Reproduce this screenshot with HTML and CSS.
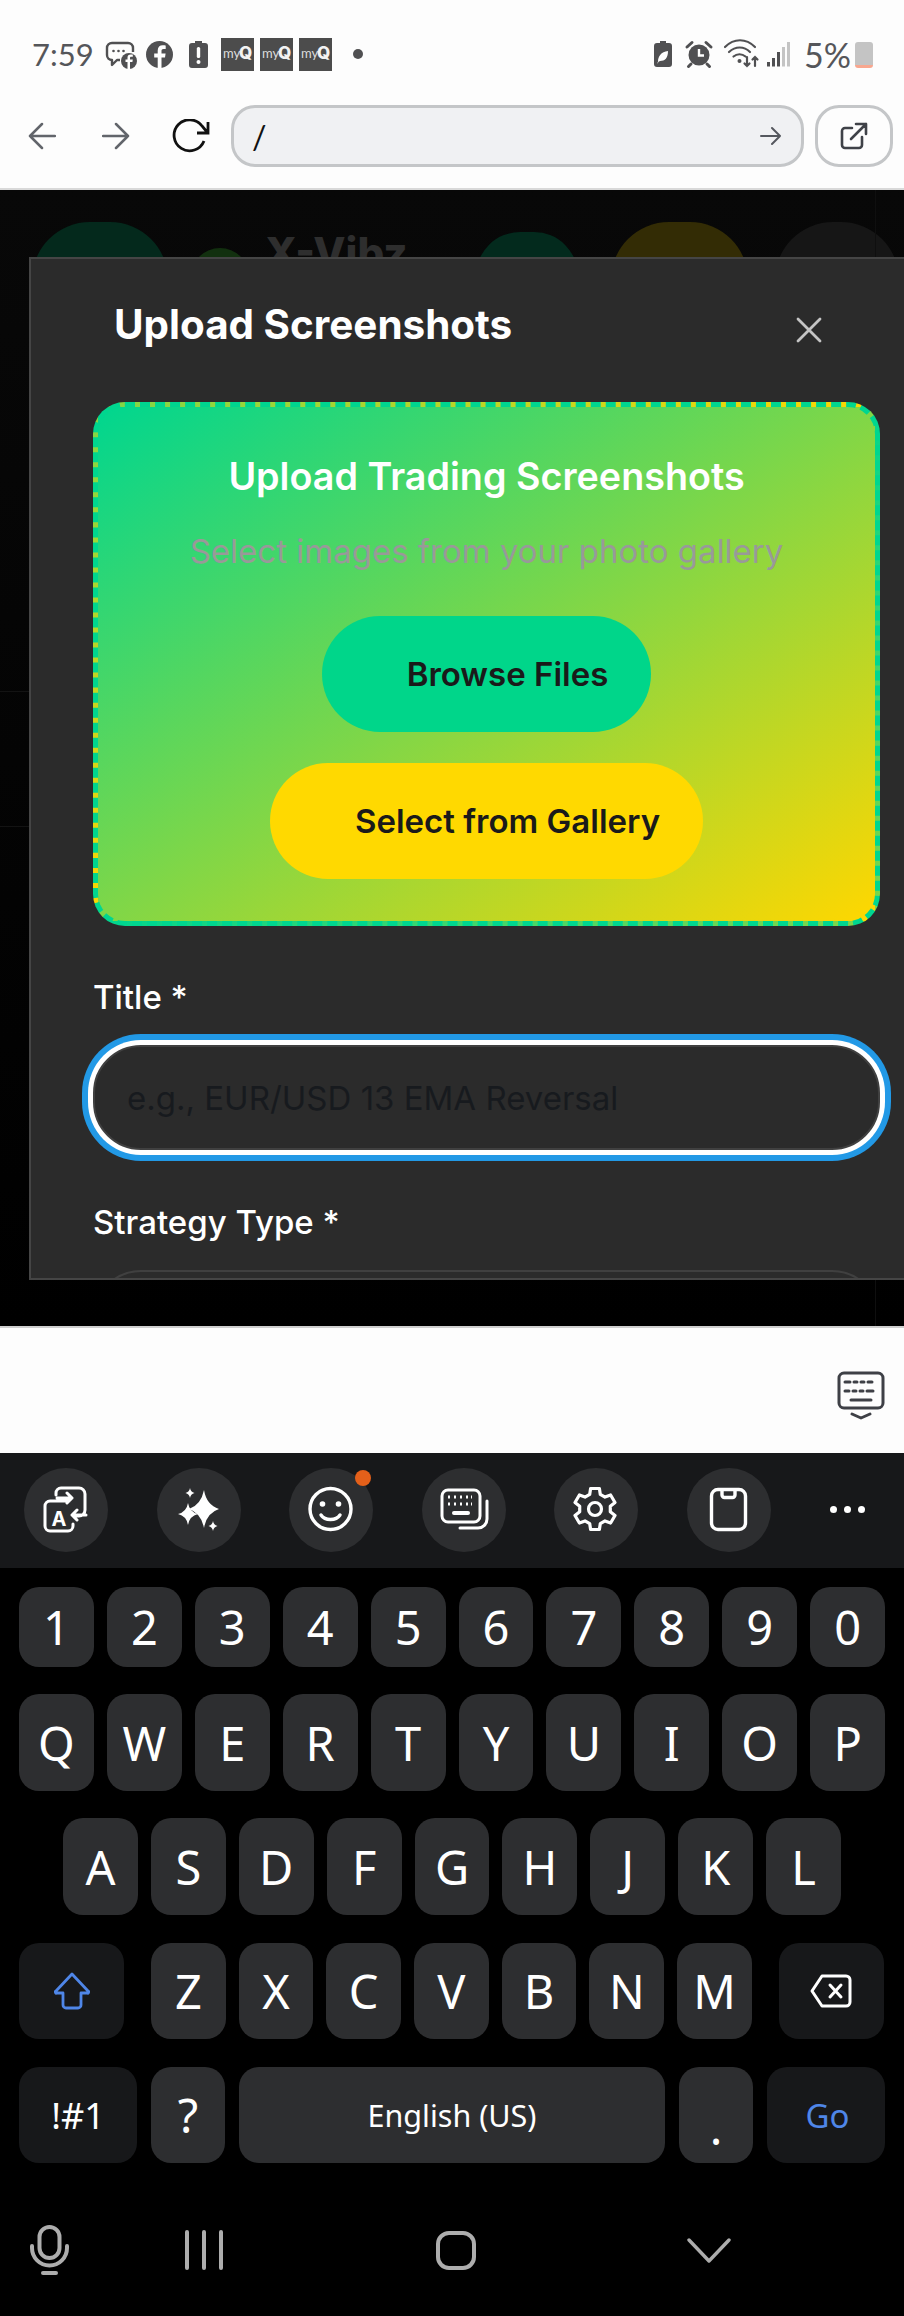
FILE: index.html
```html
<!DOCTYPE html>
<html lang="en">
<head>
  <meta charset="UTF-8">
  <meta name="viewport" content="width=device-width, initial-scale=1.0">
  <title>Upload Screenshots</title>
  <link rel="stylesheet" href="styles.css">
</head>
<body>
  <div class="phone">
    <!-- status bar + browser bar -->
    <header class="chrome">
      <div class="status">
        <span class="clock">7:59</span>
        <svg class="notif-icons" viewBox="105 38 258 33" width="258" height="33">
          <path d="M112 43h16a5 5 0 0 1 5 5v4M120 60h-3l-5 5v-5a5 5 0 0 1-5-5v-7a5 5 0 0 1 5-5" fill="none" stroke="#505052" stroke-width="2.4" stroke-linejoin="round"/>
          <circle cx="113.5" cy="51" r="1.3" fill="#505052"/><circle cx="118.5" cy="51" r="1.3" fill="#505052"/><circle cx="123.5" cy="51" r="1.3" fill="#505052"/>
          <circle cx="129" cy="61" r="8" fill="#505052"/>
          <path d="M130 69v-7h2.4l.4-2.4H130V58c0-.8.4-1.2 1.2-1.2h1.6v-2.2h-2c-2.2 0-3.3 1.2-3.3 3.2v1.8h-2V62h2v7z" fill="#fff"/>
          <circle cx="159.5" cy="54.5" r="13.5" fill="#505052"/>
          <path d="M161.500 68v-10.500h3.500l.6-4h-4.100V51c0-1.200.5-2 2.100-2h2.100v-3.500c-.5-.1-1.700-.2-3-.2-3 0-5 1.800-5 5.100v3.100h-3.500v4h3.500V68z" fill="#fff"/>
          <path d="M195 43v-2h7v2h3a3 3 0 0 1 3 3v19a3 3 0 0 1-3 3h-13a3 3 0 0 1-3-3V46a3 3 0 0 1 3-3z" fill="#505052"/>
          <rect x="196.800" y="47" width="3.400" height="11" rx="1.500" fill="#fff"/><circle cx="198.500" cy="62" r="2" fill="#fff"/>
          <g class="myq">
            <rect x="221" y="38" width="33" height="33"/><text x="223" y="58" class="myq-my">my</text><text x="239" y="59" class="myq-q">Q</text>
            <rect x="260" y="38" width="33" height="33"/><text x="262" y="58" class="myq-my">my</text><text x="278" y="59" class="myq-q">Q</text>
            <rect x="299" y="38" width="33" height="33"/><text x="301" y="58" class="myq-my">my</text><text x="317" y="59" class="myq-q">Q</text>
          </g>
          <circle cx="358" cy="54" r="5" fill="#505052"/>
        </svg>
        <svg class="sys-icons" viewBox="654 38 136 33" width="136" height="33">
          <path d="M660 43v-2h6v2h3a3 3 0 0 1 3 3v18a3 3 0 0 1-3 3h-12a3 3 0 0 1-3-3V46a3 3 0 0 1 3-3z" fill="#505052"/>
          <path d="M658 62c0-6 3-10 10-11 0 7-3 10-8 10zM657 64c1-3 3-6 6-8" fill="#fff"/>
          <circle cx="699" cy="55" r="10.500" fill="#505052"/>
          <path d="M699 49v6.500h5" fill="none" stroke="#fff" stroke-width="2.400"/>
          <path d="M687 47l5-4.500M711 47l-5-4.500M691 64l-2.500 2.500M707 64l2.500 2.500" stroke="#505052" stroke-width="3" stroke-linecap="round"/>
          <g fill="none" stroke="#505052" stroke-width="2.200" stroke-linecap="round">
            <path d="M725 47c9-9 21-9 30 0"/><path d="M729 52c6.500-6 15-6 21 0"/><path d="M733.500 56.500c3.500-3 8.500-3 12 0"/>
            <path d="M747 57v9m-2.500-2.500 2.500 2.500 2.500-2.500M755 66v-9m-2.500 2.500 2.500-2.500 2.500 2.500"/>
          </g>
          <circle cx="739.500" cy="61" r="2" fill="#505052"/>
          <g fill="#505052"><rect x="767" y="62" width="3" height="4.500"/><rect x="772" y="58" width="3" height="8.500"/><rect x="777" y="52" width="3" height="14.500"/></g>
          <g fill="#c4c4c4"><rect x="782" y="47" width="3" height="19.500"/><rect x="787" y="42" width="3" height="24.500"/></g>
        </svg>
        <span class="battery-pct">5%</span>
        <span class="battery"></span>
      </div>
      <div class="urlrow">
        <svg class="nav-arrow" viewBox="0 0 28 28" width="28" height="28"><path d="M27 14H2M14 2 2 14l12 12" fill="none" stroke="#62656b" stroke-width="2.500" stroke-linecap="round" stroke-linejoin="round"/></svg>
        <svg class="nav-arrow fwd" viewBox="0 0 28 28" width="28" height="28"><path d="M1 14h25M14 2l12 12-12 12" fill="none" stroke="#62656b" stroke-width="2.500" stroke-linecap="round" stroke-linejoin="round"/></svg>
        <svg class="reload" viewBox="0 0 38 34" width="38" height="34"><path d="M32 22a15.500 15.500 0 1 1-2-15l5 6M36 3v11H25" fill="none" stroke="#111" stroke-width="2.800" stroke-linejoin="miter"/></svg>
        <div class="urlbar">
          <span class="url-text">/</span>
          <svg viewBox="0 0 22 22" width="22" height="22"><path d="M1 11h19M12 3l8 8-8 8" fill="none" stroke="#55585e" stroke-width="2" stroke-linecap="round" stroke-linejoin="round"/></svg>
        </div>
        <div class="ext-btn">
          <svg viewBox="0 0 28 28" width="28" height="28"><path d="M12 6H5a3 3 0 0 0-3 3v14a3 3 0 0 0 3 3h14a3 3 0 0 0 3-3v-8M11 17 26 2M16 2h10v10" fill="none" stroke="#3f4248" stroke-width="2.600" stroke-linecap="round" stroke-linejoin="round"/></svg>
        </div>
      </div>
    </header>

    <!-- dimmed app with the modal on top -->
    <section class="app">
      <div class="app-head">
        <span class="pill pill-green"></span>
        <span class="dot-green"></span>
        <span class="brand">X-Vibz</span>
        <span class="pill pill-teal"></span>
        <span class="pill pill-gold"></span>
        <span class="pill pill-grey"></span>
      </div>
      <div class="bg-rows"></div>

      <div class="modal">
        <div class="modal-head">
          <h2>Upload Screenshots</h2>
          <svg class="close" viewBox="0 0 26 26" width="26" height="26"><path d="M2 2l22 22M24 2 2 24" stroke="#c4c4c4" stroke-width="2.800" stroke-linecap="round"/></svg>
        </div>

        <div class="dropzone">
          <h3>Upload Trading Screenshots</h3>
          <p>Select images from your photo gallery</p>
          <button class="pick pick-green">Browse Files</button>
          <button class="pick pick-gold">Select from Gallery</button>
        </div>

        <div class="field">
          <label for="title">Title *</label>
          <input id="title" class="focus" type="text" placeholder="e.g., EUR/USD 13 EMA Reversal">
        </div>
        <div class="field">
          <label for="stype">Strategy Type *</label>
          <input id="stype" type="text">
        </div>
      </div>
    </section>

    <div class="kb-strip">
      <svg viewBox="0 0 48 50" width="48" height="50"><rect x="2" y="2" width="44" height="35" rx="5" fill="none" stroke="#3e4046" stroke-width="3"/>
        <path d="M8 11h5m4 0h3m4 0h3m4 0h4M8 20h4m4 0h3m4 0h3m4 0h6M14 29h20" stroke="#3e4046" stroke-width="3" stroke-linecap="round"/>
        <path d="M15 43l9 4 9-4" fill="none" stroke="#3e4046" stroke-width="3" stroke-linecap="round" stroke-linejoin="round"/></svg>
    </div>

    <div class="toolbar">
      <span class="tool">
        <svg viewBox="0 0 84 84">
          <path d="M32 27v-2a5 5 0 0 1 5-5h18a6 6 0 0 1 6 6v16a6 6 0 0 1-6 6h-2M33 30h15m-5-5 5 5-5 5M62 47H48m5-5-5 5 5 5M45 33H26a5 5 0 0 0-5 5v20a5 5 0 0 0 5 5h18a5 5 0 0 0 5-5v-2" fill="none" stroke="#fff" stroke-width="3" stroke-linecap="round" stroke-linejoin="round"/>
          <text x="35" y="58" class="tool-a">A</text>
        </svg>
      </span>
      <span class="tool">
        <svg viewBox="0 0 84 84"><g fill="#fff">
          <path d="M47 22q2.500 15 15 19q-12.500 4-15 19q-3-15-15-19q12-4 15-19z"/>
          <path d="M31 35q1.500 9 10 11q-8.500 2-10 11q-1.500-9-10-11q8.500-2 10-11z"/>
          <path d="M33 20q.6 4 4.500 5q-3.900 1-4.500 5q-.6-4-4.500-5q3.900-1 4.500-5z"/>
          <path d="M56 53q.6 4 4.500 5q-3.900 1-4.500 5q-.6-4-4.500-5q3.900-1 4.500-5z"/>
        </g></svg>
      </span>
      <span class="tool">
        <svg viewBox="0 0 84 84">
          <circle cx="41.500" cy="41" r="20.500" fill="none" stroke="#fff" stroke-width="3.400"/>
          <circle cx="33.500" cy="36" r="2.800" fill="#fff"/><circle cx="49.500" cy="36" r="2.800" fill="#fff"/>
          <path d="M32 47c4 6 15 6 19 0" fill="none" stroke="#fff" stroke-width="3.400" stroke-linecap="round"/>
          <circle cx="74" cy="10" r="8" fill="#e4601a"/>
        </svg>
      </span>
      <span class="tool">
        <svg viewBox="0 0 84 84">
          <rect x="20" y="22" width="38" height="32" rx="6" fill="none" stroke="#fff" stroke-width="3"/>
          <path d="M26 29h2m4 0h2m4 0h2m4 0h2m3 0h1M26 36h2m4 0h2m4 0h2m4 0h2m3 0h1" stroke="#fff" stroke-width="3"/>
          <path d="M32 45h14" stroke="#fff" stroke-width="4" stroke-linecap="round"/>
          <path d="M65 33v18a9 9 0 0 1-9 9H38" fill="none" stroke="#fff" stroke-width="3" stroke-linecap="round"/>
        </svg>
      </span>
      <span class="tool">
        <svg viewBox="0 0 84 84">
          <path d="M36.600 20.500h8.800l.9 5.900 4.700 2.700 5.600-2.100 4.400 7.500-4.700 3.800v5.400l4.700 3.800-4.400 7.500-5.600-2.100-4.700 2.700-.9 5.900h-8.800l-.9-5.900-4.700-2.700-5.600 2.100-4.400-7.500 4.700-3.800v-5.400l-4.700-3.800 4.400-7.500 5.600 2.100 4.700-2.700z" fill="none" stroke="#fff" stroke-width="3.200" stroke-linejoin="round"/>
          <circle cx="41" cy="41" r="6.500" fill="none" stroke="#fff" stroke-width="3.200"/>
        </svg>
      </span>
      <span class="tool">
        <svg viewBox="0 0 84 84">
          <rect x="24.500" y="21.500" width="34" height="40" rx="6.500" fill="none" stroke="#fff" stroke-width="3.400"/>
          <path d="M35 22v5a2.500 2.500 0 0 0 2.500 2.500h8a2.500 2.500 0 0 0 2.500-2.500v-5" fill="none" stroke="#fff" stroke-width="3.400"/>
        </svg>
      </span>
      <span class="more"><i></i><i></i><i></i></span>
    </div>

    <!-- keyboard -->
    <div class="keyboard">
      <div class="kb-row row-short">
        <span class="key">1</span><span class="key">2</span><span class="key">3</span><span class="key">4</span><span class="key">5</span>
        <span class="key">6</span><span class="key">7</span><span class="key">8</span><span class="key">9</span><span class="key">0</span>
      </div>
      <div class="kb-row">
        <span class="key">Q</span><span class="key">W</span><span class="key">E</span><span class="key">R</span><span class="key">T</span>
        <span class="key">Y</span><span class="key">U</span><span class="key">I</span><span class="key">O</span><span class="key">P</span>
      </div>
      <div class="kb-row row-a">
        <span class="key">A</span><span class="key">S</span><span class="key">D</span><span class="key">F</span><span class="key">G</span>
        <span class="key">H</span><span class="key">J</span><span class="key">K</span><span class="key">L</span>
      </div>
      <div class="kb-row row-z">
        <span class="key key-dark key-side">
          <svg viewBox="0 0 36 38" width="36" height="38"><path d="M18 2 34 19a1 1 0 0 1-1 2h-6v12a3 3 0 0 1-3 3H12a3 3 0 0 1-3-3V21H3a1 1 0 0 1-1-2z" fill="none" stroke="#4f86e8" stroke-width="2.800" stroke-linejoin="round"/></svg>
        </span>
        <span class="key key-z">Z</span><span class="key">X</span><span class="key">C</span><span class="key">V</span><span class="key">B</span><span class="key">N</span><span class="key">M</span>
        <span class="key key-dark key-side key-back">
          <svg viewBox="0 0 42 34" width="42" height="34"><path d="M12 2h24a4 4 0 0 1 4 4v22a4 4 0 0 1-4 4H12L2 17z" fill="none" stroke="#fff" stroke-width="3" stroke-linejoin="round"/><path d="M20 11l11 12M31 11 20 23" stroke="#fff" stroke-width="3" stroke-linecap="round"/></svg>
        </span>
      </div>
      <div class="kb-row row-bottom">
        <span class="key key-dark key-sym">!#1</span>
        <span class="key">?</span>
        <span class="key key-space">English (US)</span>
        <span class="key key-period">.</span>
        <span class="key key-dark key-go">Go</span>
      </div>
      <div class="navbar">
        <svg class="nav-mic" viewBox="0 0 40 50" width="40" height="50"><rect x="9.500" y="2" width="20" height="31" rx="10" fill="none" stroke="#adadad" stroke-width="4"/><path d="M2 21v2a17.500 17.500 0 0 0 35 0v-2" fill="none" stroke="#adadad" stroke-width="4" stroke-linecap="round"/><path d="M13 48h13" stroke="#adadad" stroke-width="4" stroke-linecap="round"/></svg>
        <svg class="nav-recents" viewBox="0 0 38 40" width="38" height="40"><path d="M2 2v36M19 2v36M36 2v36" stroke="#adadad" stroke-width="4" stroke-linecap="round"/></svg>
        <span class="nav-home"></span>
        <svg class="nav-back" viewBox="0 0 44 26" width="44" height="26"><path d="M2 3l20 21L42 3" fill="none" stroke="#adadad" stroke-width="3.400" stroke-linecap="round" stroke-linejoin="round"/></svg>
      </div>
    </div>
  </div>
</body>
</html>
```

FILE: styles.css
```css
* {
  box-sizing: border-box;
}
body {
  margin: 0;
  background: #000;
  font-family: "Inter", "Liberation Sans", sans-serif;
}
h2, h3, p {
  margin: 0;
}
.phone {
  width: 904px;
  height: 2316px;
  display: flex;
  flex-direction: column;
  overflow: hidden;
}

/* status + browser */
.chrome {
  height: 190px;
  background: #fdfdfd;
  border-bottom: 2px solid #d9d9d9;
}
.status {
  height: 105px;
  padding: 38px 31px 0 32px;
  display: flex;
  align-items: flex-start;
}
.clock, .battery-pct {
  font-family: "Lato", "Liberation Sans", sans-serif;
  font-size: 31px;
  line-height: 33px;
  color: #55565a;
}
.clock {
  width: 60px;
  margin-right: 13px;
}
.sys-icons {
  margin-left: 291px;
}
.battery-pct {
  width: 46px;
  margin-left: 14px;
  font-size: 34px;
  white-space: nowrap;
}
.battery {
  width: 18px;
  height: 26px;
  margin: 4px 0 0 5px;
  border-radius: 3px;
  background: linear-gradient(#c4c4c4 88%, #f8a78f 88%);
}
.myq rect {
  fill: #4c4c4c;
}
.myq-my {
  font-family: "Lato", sans-serif;
  font-size: 13px;
  fill: #ddd;
}
.myq-q {
  font-family: "Inter", sans-serif;
  font-weight: 800;
  font-size: 17px;
  fill: #f2f2f2;
}
.urlrow {
  display: flex;
  align-items: center;
  height: 62px;
  padding-left: 28px;
}
.nav-arrow.fwd {
  margin-left: 46px;
}
.reload {
  margin-left: 42px;
}
.urlbar {
  width: 573px;
  height: 62px;
  margin-left: 21px;
  padding: 0 19px 0 18px;
  display: flex;
  align-items: center;
  justify-content: space-between;
  background: #f0f1f3;
  border: 3px solid #c4c6c8;
  border-radius: 24px;
}
.url-text {
  font-family: "Lato", sans-serif;
  font-size: 32px;
  color: #111;
}
.ext-btn {
  width: 78px;
  height: 62px;
  margin-left: 11px;
  display: flex;
  align-items: center;
  justify-content: center;
  border: 3px solid #c4c6c8;
  border-radius: 24px;
}

/* dimmed app behind the modal */
.app {
  position: relative;
  height: 1136px;
  background: linear-gradient(#080808, #000);
  overflow: hidden;
}
.app::after {
  content: "";
  position: absolute;
  top: 0;
  bottom: 0;
  left: 875px;
  width: 1px;
  background: #0f0f0f;
}
.app-head {
  display: flex;
  align-items: flex-start;
  height: 502px;
  padding-left: 32px;
  border-bottom: 1px solid #131313;
}
.pill {
  display: block;
  height: 136px;
  border-radius: 58px;
}
.pill-green {
  width: 136px;
  margin-top: 32px;
  background: #04291c;
}
.dot-green {
  width: 58px;
  height: 58px;
  margin: 58px 0 0 23px;
  border-radius: 50%;
  background: #12300f;
}
.brand {
  margin: 39px 0 0 16px;
  width: 136px;
  font-size: 42px;
  line-height: 48px;
  font-weight: 800;
  white-space: nowrap;
  color: #2e2e2e;
}
.pill-teal {
  width: 102px;
  margin: 42px 0 0 75px;
  border-radius: 44px;
  background: #032a1d;
}
.pill-gold {
  width: 137px;
  margin: 32px 0 0 33px;
  background: #332c05;
}
.pill-grey {
  width: 124px;
  margin: 32px 0 0 27px;
  background: #161616;
}
.bg-rows {
  height: 135px;
  border-bottom: 1px solid #131313;
}

/* modal */
.modal {
  position: absolute;
  z-index: 1;
  left: 29px;
  top: 67px;
  width: 904px;
  height: 1023px;
  padding: 42px 0 0 62px;
  background: #2b2b2b;
  border: 2px solid #454545;
  overflow: hidden;
}
.modal-head {
  width: 787px;
  height: 48px;
  margin-bottom: 53px;
  padding: 0 58px 0 21px;
  display: flex;
  align-items: center;
  justify-content: space-between;
}
.modal-head h2 {
  font-size: 40.400px;
  line-height: 48px;
  font-weight: 700;
  color: #fff;
}
.close {
  margin-top: 10px;
}
.dropzone {
  width: 787px;
  height: 524px;
  padding-top: 47px;
  display: flex;
  flex-direction: column;
  align-items: center;
  border: 5px dashed #00d68f;
  border-radius: 32px;
  background: linear-gradient(to bottom right, #00d68f, #ffd700);
}
.dropzone h3 {
  font-size: 37.700px;
  line-height: 44px;
  font-weight: 600;
  color: #fff;
}
.dropzone p {
  margin: 33px 0 45px;
  font-size: 33px;
  line-height: 40px;
  color: #999;
}
.pick {
  height: 116px;
  padding: 0 43px 0 85px;
  border: 0;
  border-radius: 58px;
  font-family: inherit;
  font-size: 33px;
  font-weight: 600;
  color: #1a1a1a;
}
.pick-green {
  background: #00d68a;
  margin-bottom: 31px;
}
.pick-gold {
  background: #ffd900;
}
.field {
  width: 787px;
  margin-top: 52px;
}
.dropzone + .field {
  margin-top: 51px;
}
.field label {
  display: block;
  margin-bottom: 28px;
  font-size: 33px;
  line-height: 40px;
  font-weight: 500;
  color: #fff;
}
.field input {
  display: block;
  width: 787px;
  height: 105px;
  padding: 0 32px;
  font-family: inherit;
  font-size: 33px;
  color: #fff;
  background: #2b2b2b;
  border: 2px solid #404040;
  border-radius: 48px;
  outline: none;
}
.field input::placeholder {
  color: #171a1e;
}
.field input.focus {
  box-shadow: 0 0 0 5px #fff, 0 0 0 11px #2299e6;
}

/* keyboard */
.kb-strip {
  height: 127px;
  padding: 43px 19px 0 0;
  display: flex;
  justify-content: flex-end;
  align-items: flex-start;
  background: #fdfdfd;
  border-top: 2px solid #cfcfcf;
}
.toolbar {
  height: 115px;
  padding: 15px 0 0 24px;
  display: flex;
  align-items: flex-start;
  gap: 48.6px;
  background: #17181a;
}
.tool {
  width: 84px;
  height: 84px;
  border-radius: 50%;
  background: #2d2e30;
}
.tool svg {
  display: block;
  width: 84px;
  height: 84px;
}
.tool-a {
  font-family: "Inter", sans-serif;
  font-size: 20px;
  font-weight: 700;
  fill: #fff;
  text-anchor: middle;
}
.more {
  display: flex;
  gap: 7px;
  margin: 38px 0 0 10px;
}
.more i {
  width: 7px;
  height: 7px;
  border-radius: 50%;
  background: #fff;
}
.keyboard {
  flex: 1;
  padding: 19px 19px 0;
  background: #000;
  display: flex;
  flex-direction: column;
  gap: 27px;
  font-family: "Noto Sans", "Open Sans", sans-serif;
}
.kb-row {
  height: 97px;
  display: flex;
  gap: 13px;
}
.row-short {
  height: 80px;
}
.row-a {
  padding: 0 44px;
}
.row-z, .row-bottom {
  height: 96px;
  margin-top: 1px;
}
.key {
  flex: 1 1 0;
  display: flex;
  align-items: center;
  justify-content: center;
  border-radius: 20px;
  background: #2d2e30;
  font-size: 47px;
  color: #fff;
}
.key-dark {
  background: #17181a;
}
.row-z .key {
  flex: 0 0 74.700px;
}
.row-z .key-side {
  flex: 0 0 105px;
}
.key-z {
  margin-left: 14px;
}
.key-back {
  margin-left: 14px;
}
.row-bottom {
  gap: 14px;
}
.row-bottom .key {
  flex: 0 0 74px;
}
.row-bottom .key-sym {
  flex: 0 0 118px;
  font-size: 36px;
}
.row-bottom .key-space {
  flex: 0 0 426px;
  font-size: 30.500px;
}
.row-bottom .key-go {
  flex: 0 0 118px;
  padding-left: 3px;
  font-size: 33px;
  color: #4f86e8;
}
.row-bottom .key-period {
  align-items: flex-end;
  padding-bottom: 4px;
}
.navbar {
  display: flex;
  align-items: center;
  height: 50px;
  margin-top: 35px;
  padding-left: 11px;
}
.nav-recents {
  margin-left: 115px;
}
.nav-home {
  width: 40px;
  height: 39px;
  margin-left: 213px;
  border: 4px solid #adadad;
  border-radius: 13px;
}
.nav-back {
  margin-left: 211px;
}
```
